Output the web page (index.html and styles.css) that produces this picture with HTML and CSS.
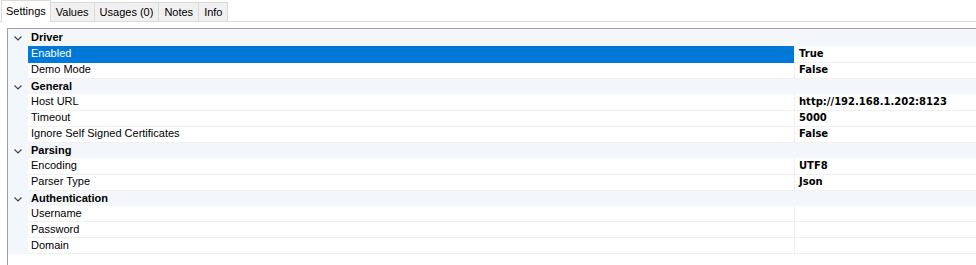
FILE: index.html
```html
<!DOCTYPE html>
<html lang="en">
<head>
    <meta charset="UTF-8">
    <title>Driver Settings</title>
    <link rel="stylesheet" href="styles.css">
</head>
<body>
<div class="tab-strip">
    <div class="tab tab--selected">Settings</div>
    <div class="tab">Values</div>
    <div class="tab">Usages (0)</div>
    <div class="tab">Notes</div>
    <div class="tab">Info</div>
</div>

<div class="prop-grid">
    <div class="prop-row prop-row--category">
        <span class="prop-gutter"><svg class="chevron" width="8" height="5" viewBox="0 0 8 5"><polyline points="0.5,0.5 4,4 7.5,0.5"/></svg></span>
        <span class="prop-name">Driver</span>
    </div>
    <div class="prop-row prop-row--selected">
        <span class="prop-gutter"></span>
        <span class="prop-name">Enabled</span>
        <span class="prop-value">True</span>
    </div>
    <div class="prop-row">
        <span class="prop-gutter"></span>
        <span class="prop-name">Demo Mode</span>
        <span class="prop-value">False</span>
    </div>

    <div class="prop-row prop-row--category">
        <span class="prop-gutter"><svg class="chevron" width="8" height="5" viewBox="0 0 8 5"><polyline points="0.5,0.5 4,4 7.5,0.5"/></svg></span>
        <span class="prop-name">General</span>
    </div>
    <div class="prop-row">
        <span class="prop-gutter"></span>
        <span class="prop-name">Host URL</span>
        <span class="prop-value">http://192.168.1.202:8123</span>
    </div>
    <div class="prop-row">
        <span class="prop-gutter"></span>
        <span class="prop-name">Timeout</span>
        <span class="prop-value">5000</span>
    </div>
    <div class="prop-row">
        <span class="prop-gutter"></span>
        <span class="prop-name">Ignore Self Signed Certificates</span>
        <span class="prop-value">False</span>
    </div>

    <div class="prop-row prop-row--category">
        <span class="prop-gutter"><svg class="chevron" width="8" height="5" viewBox="0 0 8 5"><polyline points="0.5,0.5 4,4 7.5,0.5"/></svg></span>
        <span class="prop-name">Parsing</span>
    </div>
    <div class="prop-row">
        <span class="prop-gutter"></span>
        <span class="prop-name">Encoding</span>
        <span class="prop-value">UTF8</span>
    </div>
    <div class="prop-row">
        <span class="prop-gutter"></span>
        <span class="prop-name">Parser Type</span>
        <span class="prop-value">Json</span>
    </div>

    <div class="prop-row prop-row--category">
        <span class="prop-gutter"><svg class="chevron" width="8" height="5" viewBox="0 0 8 5"><polyline points="0.5,0.5 4,4 7.5,0.5"/></svg></span>
        <span class="prop-name">Authentication</span>
    </div>
    <div class="prop-row">
        <span class="prop-gutter"></span>
        <span class="prop-name">Username</span>
        <span class="prop-value"></span>
    </div>
    <div class="prop-row">
        <span class="prop-gutter"></span>
        <span class="prop-name">Password</span>
        <span class="prop-value"></span>
    </div>
    <div class="prop-row">
        <span class="prop-gutter"></span>
        <span class="prop-name">Domain</span>
        <span class="prop-value"></span>
    </div>
</div>
</body>
</html>
```

FILE: styles.css
```css
html, body {
    margin: 0;
    padding: 0;
    height: 100%;
    background: #fff;
    font-family: "Liberation Sans", Arial, sans-serif;
    font-size: 11px;
    color: #000;
    overflow: hidden;
}

.tab-strip {
    display: flex;
    align-items: flex-end;
    height: 21px;
    padding-left: 1px;
    border-bottom: 1px solid #dadada;
}

.tab {
    box-sizing: border-box;
    height: 19px;
    line-height: 18px;
    padding: 0 5px;
    background: #f0f0f0;
    border: 1px solid #d9d9d9;
    border-bottom: none;
    border-left: none;
}

.tab--selected {
    height: 22px;
    line-height: 20px;
    margin-bottom: -1px;
    padding: 0 4px 0 4px;
    background: #fff;
    border-left: 1px solid #d9d9d9;
}

.prop-grid {
    box-sizing: border-box;
    margin: 6px 0 0 7px;
    height: calc(100% - 28px);
    border-top: 1px solid #a0a0a0;
    border-left: 1px solid #a0a0a0;
}

.prop-row {
    display: grid;
    grid-template-columns: 20px 767px 1fr;
    height: 16px;
    line-height: 15px;
}

.prop-gutter {
    background: #f3f6fa;
    display: flex;
    align-items: center;
    justify-content: center;
}

.prop-name {
    padding-left: 3px;
    border-bottom: 1px solid #f0f0f0;
    border-right: 1px solid #f0f0f0;
    white-space: nowrap;
}

.prop-value {
    padding-left: 4px;
    font-family: "DejaVu Sans", Verdana, sans-serif;
    font-size: 10px;
    font-weight: bold;
    line-height: 16px;
    border-bottom: 1px solid #f0f0f0;
    white-space: nowrap;
}

.prop-row--category {
    background: #f3f6fa;
    grid-template-columns: 20px 1fr;
    font-weight: bold;
}

.prop-row--category:first-child {
    height: 17px;
}

.prop-row--category .prop-name {
    border: none;
    line-height: 17px;
}

.prop-row--selected .prop-name {
    background: #0078d7;
    color: #fff;
    border-bottom-color: #0078d7;
}

.chevron {
    display: block;
    margin-top: 1px;
    fill: none;
    stroke: #444;
    stroke-width: 1.2;
}
```
